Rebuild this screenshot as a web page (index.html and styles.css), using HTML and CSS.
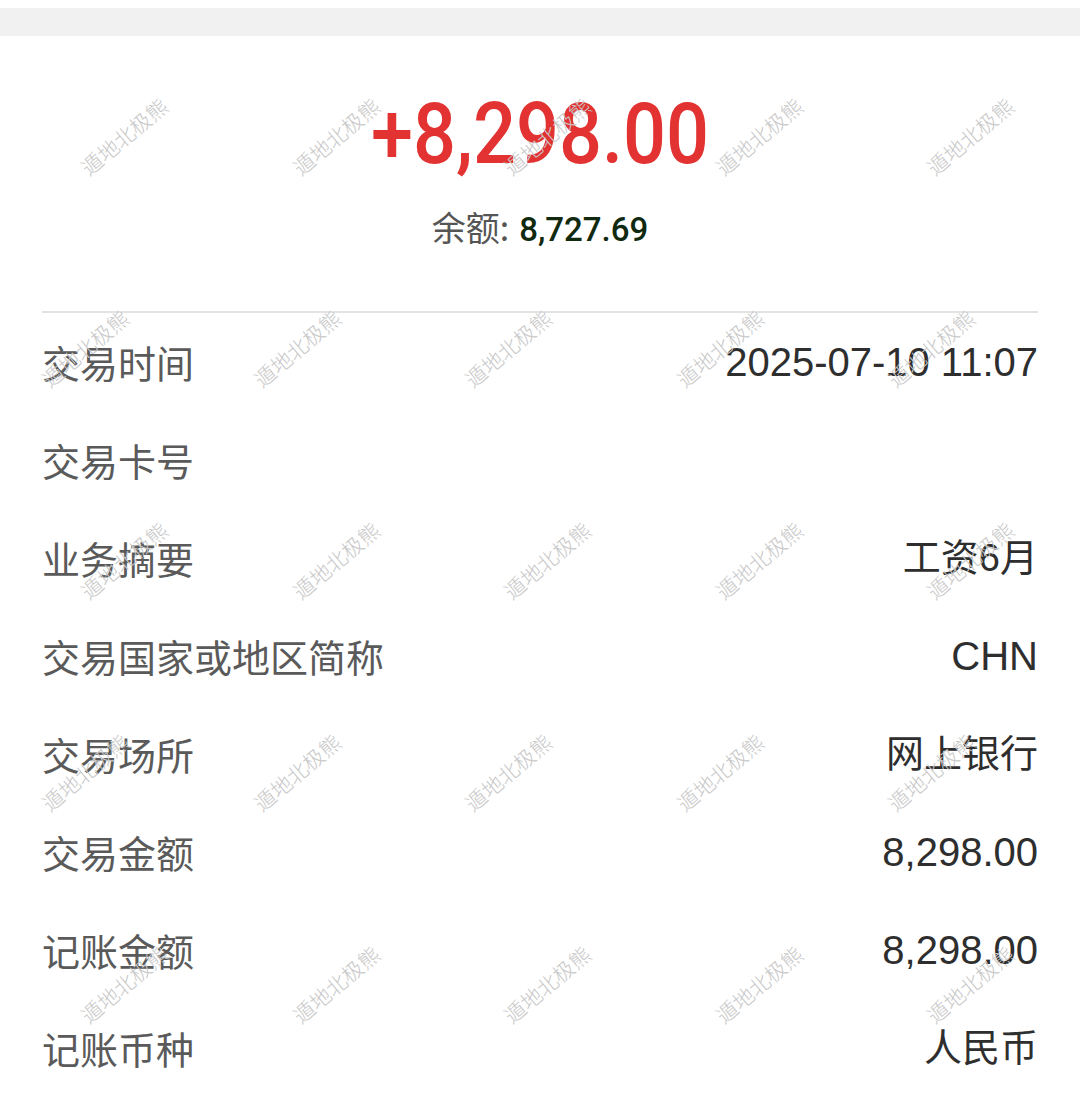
FILE: index.html
```html
<!DOCTYPE html>
<html lang="zh-CN">
<head>
    <meta charset="UTF-8">
    <meta name="viewport" content="width=device-width, initial-scale=1.0">
    <title>交易详情</title>
    <link rel="stylesheet" href="styles.css">
</head>
<body>
    <div class="topbar"></div>

    <div class="resumen">
        <div class="monto">+8,298.00</div>
        <div class="saldo"><span class="saldo-label">余额:</span> <span class="saldo-num">8,727.69</span></div>
    </div>

    <div class="divisor"></div>

    <div class="detalle">
        <div class="fila"><span class="etiqueta">交易时间</span><span class="valor">2025-07-10 11:07</span></div>
        <div class="fila"><span class="etiqueta">交易卡号</span><span class="valor"></span></div>
        <div class="fila"><span class="etiqueta">业务摘要</span><span class="valor cjk">工资6月</span></div>
        <div class="fila"><span class="etiqueta">交易国家或地区简称</span><span class="valor">CHN</span></div>
        <div class="fila"><span class="etiqueta">交易场所</span><span class="valor cjk">网上银行</span></div>
        <div class="fila"><span class="etiqueta">交易金额</span><span class="valor">8,298.00</span></div>
        <div class="fila"><span class="etiqueta">记账金额</span><span class="valor">8,298.00</span></div>
        <div class="fila"><span class="etiqueta">记账币种</span><span class="valor cjk">人民币</span></div>
    </div>

    <!-- marca de agua encima de todo -->
    <div class="marcas">
        <div class="marca-fila">
            <span>遁地北极熊</span><span>遁地北极熊</span><span>遁地北极熊</span><span>遁地北极熊</span><span>遁地北极熊</span>
        </div>
        <div class="marca-fila desplazada">
            <span>遁地北极熊</span><span>遁地北极熊</span><span>遁地北极熊</span><span>遁地北极熊</span><span>遁地北极熊</span>
        </div>
        <div class="marca-fila">
            <span>遁地北极熊</span><span>遁地北极熊</span><span>遁地北极熊</span><span>遁地北极熊</span><span>遁地北极熊</span>
        </div>
        <div class="marca-fila desplazada">
            <span>遁地北极熊</span><span>遁地北极熊</span><span>遁地北极熊</span><span>遁地北极熊</span><span>遁地北极熊</span>
        </div>
        <div class="marca-fila">
            <span>遁地北极熊</span><span>遁地北极熊</span><span>遁地北极熊</span><span>遁地北极熊</span><span>遁地北极熊</span>
        </div>
    </div>
</body>
</html>
```

FILE: styles.css
```css
body {
    font-family: "Noto Sans CJK SC", sans-serif;
    margin: 0;
    padding: 0;
    background-color: #ffffff;
    position: relative;
    overflow: hidden;
}

.topbar {
    margin-top: 8px;
    height: 28px;
    background-color: #f1f1f1;
}

.resumen {
    display: flex;
    flex-direction: column;
    align-items: center;
}

.monto {
    margin-top: 55px;
    font-family: Roboto, sans-serif;
    font-weight: 500;
    font-size: 86px;
    line-height: 86px;
    color: #e23231;
    transform: scaleX(0.88);
}

.saldo {
    margin-top: 30px;
    height: 40px;
    line-height: 40px;
    display: flex;
    align-items: baseline;
    gap: 10px;
}

.saldo-label {
    font-family: "Noto Sans CJK SC", sans-serif;
    font-size: 34px;
    color: #555555;
}

.saldo-num {
    font-family: Roboto, sans-serif;
    font-weight: 500;
    font-size: 33px;
    color: #10290f;
}

.divisor {
    margin: 64px 42px 0;
    border-top: 2px solid #e3e3e3;
}

.detalle {
    padding: 0 42px;
}

.fila {
    height: 98px;
    display: flex;
    justify-content: space-between;
    align-items: center;
}

.etiqueta {
    font-size: 38px;
    line-height: 1;
    color: #5a5a5a;
}

.valor {
    font-family: "Liberation Sans", "Noto Sans CJK SC", sans-serif;
    font-size: 40px;
    line-height: 1;
    color: #2e2e2e;
}

.valor.cjk {
    font-size: 38px;
}

.marcas {
    position: absolute;
    top: 30px;
    left: 18px;
    pointer-events: none;
}

.marca-fila {
    display: flex;
    height: 212px;
    align-items: center;
}

.marca-fila.desplazada {
    margin-left: -39px;
}

.marca-fila span {
    width: 211.5px;
    flex-shrink: 0;
    text-align: center;
    font-size: 21px;
    font-weight: 300;
    color: #c8c8c8;
    transform: rotate(-40deg);
}
```
